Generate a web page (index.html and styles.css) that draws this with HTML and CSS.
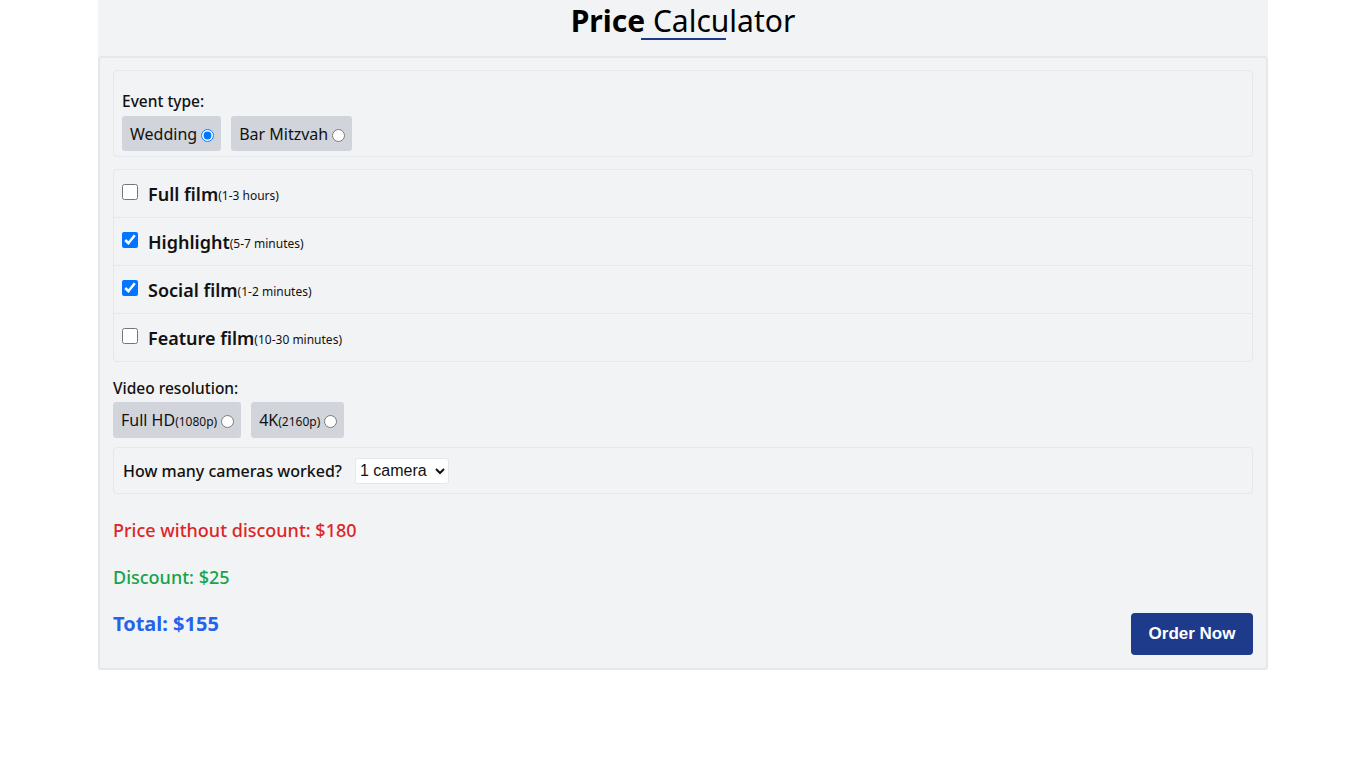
FILE: index.html
```html
<!DOCTYPE html>
<html lang="en">
<head>
<meta charset="utf-8">
<title>Price Calculator</title>
<link rel="stylesheet" href="styles.css">
</head>
<body>
<div class="wrap">
  <h1 class="title"><b>Price</b> Calculator</h1>
  <div class="card">
    <div class="box event">
      <div class="label">Event type:</div>
      <div class="pills">
        <label class="pill">Wedding <input type="radio" name="ev" checked></label>
        <label class="pill">Bar Mitzvah <input type="radio" name="ev"></label>
      </div>
    </div>
    <div class="box list">
      <label class="row"><input type="checkbox"><span class="name">Full film</span><small>(1-3 hours)</small></label>
      <label class="row"><input type="checkbox" checked><span class="name">Highlight</span><small>(5-7 minutes)</small></label>
      <label class="row"><input type="checkbox" checked><span class="name">Social film</span><small>(1-2 minutes)</small></label>
      <label class="row"><input type="checkbox"><span class="name">Feature film</span><small>(10-30 minutes)</small></label>
    </div>
    <div class="res">
      <div class="label">Video resolution:</div>
      <div class="pills">
        <label class="pill tall">Full HD<small>(1080p)</small> <input type="radio" name="res"></label>
        <label class="pill tall">4K<small>(2160p)</small> <input type="radio" name="res"></label>
      </div>
    </div>
    <div class="box cams">
      <span class="label">How many cameras worked?</span>
      <select class="sel"><option>1 camera</option><option>2 cameras</option></select>
    </div>
    <div class="summary">
      <div class="totals">
        <p class="price">Price without discount: $180</p>
        <p class="disc">Discount: $25</p>
        <p class="total">Total: $155</p>
      </div>
      <button class="order">Order Now</button>
    </div>
  </div>
</div>
</body>
</html>
```
FILE: styles.css
```css
html, body { margin: 0; padding: 0; background: #fff; }
body { font-family: "Noto Sans", "Open Sans", sans-serif; color: #111; }
.wrap {
  width: 1170px;
  margin: 0 auto;
  background: #f2f3f5;
}
.title {
  position: relative;
  margin: 0;
  height: 56px;
  line-height: 42px;
  text-align: center;
  font-size: 30px;
  font-weight: 400;
  color: #000;
}
.title b { font-weight: 700; }
.title::after {
  content: "";
  position: absolute;
  left: 50%;
  top: 38px;
  width: 85px;
  height: 2px;
  margin-left: -42px;
  background: #1e3a8a;
}
.card {
  border: 2px solid #e5e7eb;
  border-radius: 4px;
  padding: 12px 13px 13px 13px;
  display: flex;
  flex-direction: column;
}
.box {
  border: 1px solid #e5e7eb;
  border-radius: 4px;
}
.event { padding: 20px 8px 5px; margin-bottom: 12px; }
.label { font-size: 15.5px; font-weight: 500; line-height: 20px; }
.pills { display: flex; gap: 10px; margin-top: 5px; }
.pill {
  background: #d1d5db;
  border-radius: 3px;
  height: 35px;
  padding: 0 7px 0 8px;
  display: flex;
  align-items: center;
  font-size: 16px;
}
.pill.tall { height: 36px; }
.pill input { margin: 3px 0 0 4px; width: 13px; height: 13px; }
.pill small { font-size: 12px; margin-top: 3px; }
.list { display: flex; flex-direction: column; }
.row {
  height: 47px;
  display: flex;
  align-items: center;
  padding: 0 8px;
  border-top: 1px solid #e5e7eb;
}
.row:first-child { border-top: 0; }
.row input { width: 16px; height: 16px; margin: 0 10px 4px 0; }
.row .name { font-size: 18px; font-weight: 600; }
.row small { font-size: 12px; margin-top: 4px; }
.res { margin-top: 16px; }
.res .pills { margin-top: 4px; }
.cams {
  margin-top: 9px;
  height: 45px;
  display: flex;
  align-items: center;
  padding: 0 9px;
  gap: 13px;
}
.cams .label { font-size: 16px; }
.sel {
  font-family: "Liberation Sans", Arial, sans-serif;
  font-size: 16px;
  height: 26px;
  width: 94px;
  border: 1px solid #e5e7eb;
  border-radius: 3px;
  background: #fff;
  color: #111;
}
.summary {
  display: flex;
  justify-content: space-between;
  align-items: flex-end;
  margin-top: 13px;
}
.totals { padding-bottom: 8px; }
.totals p { margin: 0; line-height: 47px; font-size: 18px; font-weight: 500; }
.price { color: #dc2626; }
.disc { color: #16a34a; }
.totals .total { color: #2563eb; font-size: 20px; font-weight: 700; line-height: 46px; }
.order {
  background: #1e3a8a;
  color: #fff;
  border: 0;
  border-radius: 4px;
  width: 122px;
  height: 42px;
  font-family: "Liberation Sans", Arial, sans-serif;
  font-weight: 700;
  font-size: 17px;
  cursor: pointer;
}
```
